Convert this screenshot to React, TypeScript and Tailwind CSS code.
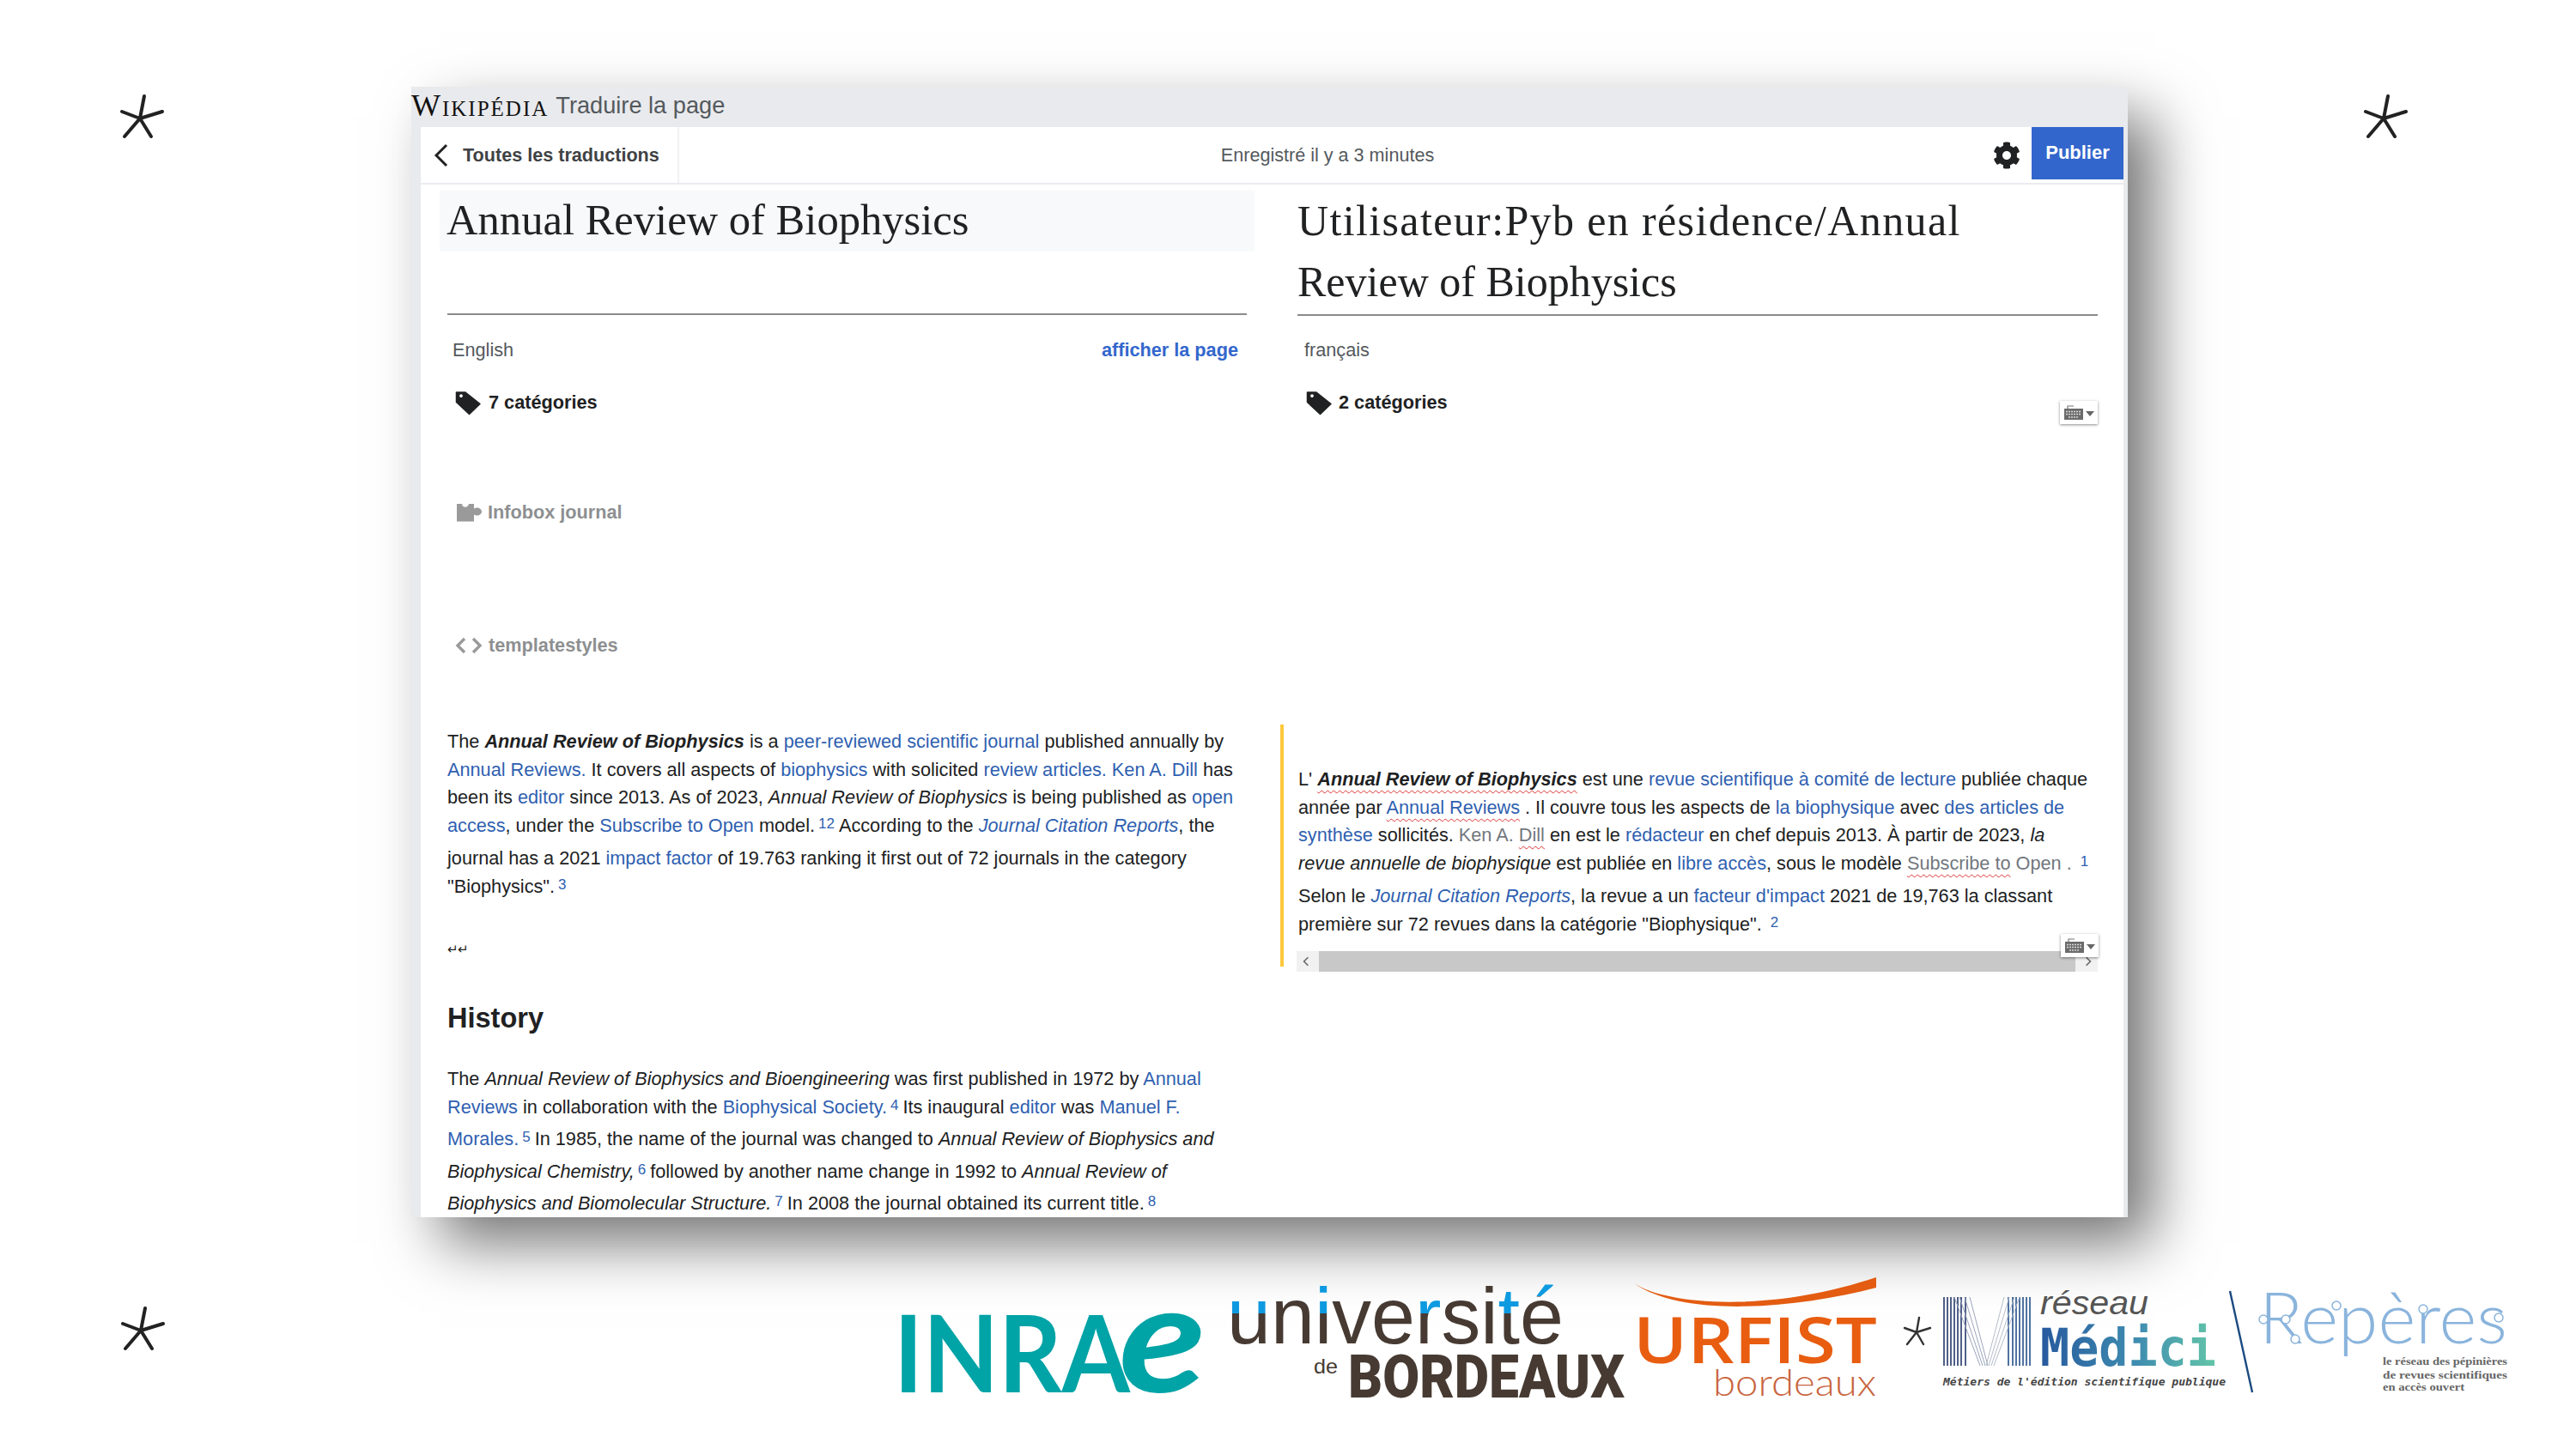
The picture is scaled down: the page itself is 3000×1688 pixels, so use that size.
import React from "react";
import { FaCog } from "react-icons/fa";

const A = ({ children }: { children: React.ReactNode }) => <span className="text-[#2f5fb0]">{children}</span>;
const W = ({ children, gray }: { children: React.ReactNode; gray?: boolean }) => (
  <span className={`underline decoration-wavy decoration-[#d33] decoration-1 underline-offset-[5px] ${gray ? "text-[#72777d]" : ""}`}>{children}</span>
);
const S = ({ children }: { children: React.ReactNode }) => <sup className="text-[#2f5fb0] text-[17px] top-[-4px] pl-[4px] pr-[5px]">{children}</sup>;
const L = ({ children, extra }: { children: React.ReactNode; extra?: boolean }) => (
  <div className={`whitespace-nowrap h-[32.5px] leading-[32.5px] ${extra ? "mt-[6px]" : ""}`}>{children}</div>
);

const Star = ({ className }: { className: string }) => (
  <svg viewBox="0 0 140 100" className={className} fill="none" stroke="#222" strokeWidth="4" strokeLinecap="round">
    <path d="M63 58L68 32M63 58L42 50M63 58L89 50M63 58L45 79M63 58L76 79" />
  </svg>
);

const Keyboard = () => (
  <div className="w-[44px] h-[27px] bg-white shadow-[0_1px_3px_rgba(0,0,0,0.45)] flex items-center justify-center gap-[3px]">
    <svg viewBox="0 0 22 18" className="w-[22px] h-[18px]">
      <path d="M4 4V1H11" fill="none" stroke="#777" strokeWidth="1.2" />
      <rect x="0" y="4" width="22" height="13" fill="#6b6b6b" />
      <path d="M2 7.5H20M2 10.5H20M5 14H17" stroke="#d8d8d8" strokeWidth="1.4" strokeDasharray="2 1" />
    </svg>
    <svg viewBox="0 0 10 6" className="w-[10px] h-[6px] mt-[3px]"><path d="M0 0H10L5 6Z" fill="#666" /></svg>
  </div>
);

const Tag = () => (
  <svg viewBox="0 0 30 29" className="w-[30px] h-[29px] shrink-0">
    <path fillRule="evenodd" fill="#202122" stroke="#202122" strokeWidth="1.5" strokeLinejoin="round" d="M1.5 2H12L29 15.5L16.5 27.5L1.5 13.5ZM7 3.5A2.6 2.6 0 1 0 7 8.7A2.6 2.6 0 1 0 7 3.5Z" />
  </svg>
);

const Puzzle = () => (
  <svg viewBox="0 0 30 22" className="w-[30px] h-[22px] shrink-0">
    <path fill="#9a9a9a" d="M1 1H7C7.5 6 14 6 15 1H21V6.5C25 4 30 6.5 30 10C30 13.5 25 16 21 13.5V21.5H1Z" />
  </svg>
);

const CodeMark = () => (
  <svg viewBox="0 0 32 20" className="w-[32px] h-[20px] shrink-0" fill="none" stroke="#9a9a9a" strokeWidth="3.4">
    <path d="M11 2L3 10L11 18M21 2L29 10L21 18" />
  </svg>
);

const Medici = () => {
  const xs = [0, 4, 8, 12, 16, 20, 25];
  return (
    <g fill="none">
      {xs.map((d) => <line key={`a${d}`} x1={2264 + d} y1="1511" x2={2264 + d} y2="1591" stroke="#24386a" strokeWidth="1.6" />)}
      {xs.map((d) => <line key={`b${d}`} x1={2364 - d} y1="1511" x2={2364 - d} y2="1591" stroke="#24508a" strokeWidth="1.6" />)}
      {[0, 6, 12, 18].map((d) => <line key={`c${d}`} x1={2276 + d} y1="1511" x2={2306 + d / 2} y2="1591" stroke="#9aa6bc" strokeWidth="1" />)}
      {[0, 6, 12, 18].map((d) => <line key={`e${d}`} x1={2352 - d} y1="1511" x2={2322 - d / 2} y2="1591" stroke="#b4bccb" strokeWidth="1" />)}
    </g>
  );
};

export default function App() {
  return (
    <div className="w-[3000px] h-[1688px] bg-white overflow-hidden font-['Liberation_Sans',Arial,sans-serif] text-[#202122] text-[21.7px]">
      <div className="flex items-start h-[1418px]">
        <Star className="w-[140px] h-[100px] ml-[100px] mt-[80px] shrink-0" />
        <div className="ml-[239px] mt-[101px] w-[1999px] h-[1317px] shrink-0 bg-[#e9eaed] flex flex-col pl-[11px] pr-[5px] shadow-[32px_32px_66px_-2px_rgba(0,0,0,0.55)]">
          <div className="h-[47px] -ml-[11px] flex items-center shrink-0 pb-[4px]">
            <span className="font-['Liberation_Serif',serif] text-[36px] tracking-[2px] [font-variant:small-caps] text-[#111] leading-none">Wikipédia</span>
            <span className="ml-[8px] text-[27.2px] text-[#54595d] leading-none">Traduire la page</span>
          </div>
          <div className="flex-1 bg-white flex flex-col overflow-hidden">
            <div className="h-[67px] shrink-0 border-b-2 border-[#eaecf0] flex items-start">
              <div className="w-[301px] h-[65px] border-r-2 border-[#f0f1f3] flex items-center pl-[15px]">
                <svg viewBox="0 0 18 28" className="w-[18px] h-[28px]"><path d="M15 2L3 14L15 26" fill="none" stroke="#202122" strokeWidth="3" /></svg>
                <span className="ml-[16px] font-bold text-[21.6px] text-[#404244] whitespace-nowrap pt-[2px]">Toutes les traductions</span>
              </div>
              <div className="flex-1 h-[65px] flex items-center justify-center pr-[20px] pt-[2px] text-[#54595d] text-[21.6px]">Enregistré il y a 3 minutes</div>
              <div className="h-[65px] flex items-center pr-[13px]"><FaCog className="w-[32px] h-[32px] text-[#202122]" /></div>
              <div className="w-[107px] h-[61px] bg-[#3366cc] text-white font-bold text-[22px] flex items-center justify-center pb-[2px]">Publier</div>
            </div>
            <div className="flex-1 flex overflow-hidden">
              <div className="w-[1021px] shrink-0 pl-[22px]">
                <div className="mt-[7px] w-[949px] h-[71px] bg-[#f8f9fa] pl-[8px] pb-[3px] flex items-center font-['Liberation_Serif',serif] text-[50.6px] leading-none">Annual Review of Biophysics</div>
                <div className="ml-[9px] w-[931px]">
                  <div className="mt-[72px] h-[2px] bg-[#8a8a8a]" />
                  <div className="mt-[26px] h-[30px] flex items-center justify-between pl-[6px] pr-[10px]">
                    <span className="text-[#54595d]">English</span>
                    <span className="text-[#3366cc] font-bold">afficher la page</span>
                  </div>
                  <div className="mt-[31px] h-[30px] flex items-center pl-[9px] gap-[9px] font-bold">
                    <Tag /><span>7 catégories</span>
                  </div>
                  <div className="mt-[98px] h-[30px] flex items-center pl-[10px] gap-[7px] font-bold text-[#8d8f91]">
                    <Puzzle /><span>Infobox journal</span>
                  </div>
                  <div className="mt-[125px] h-[30px] flex items-center pl-[9px] gap-[7px] font-bold text-[#8d8f91]">
                    <CodeMark /><span>templatestyles</span>
                  </div>
                  <div className="mt-[81px]">
                    <L>The <b><i>Annual Review of Biophysics</i></b> is a <A>peer-reviewed scientific journal</A> published annually by</L>
                    <L><A>Annual Reviews.</A> It covers all aspects of <A>biophysics</A> with solicited <A>review articles. Ken A. Dill</A> has</L>
                    <L>been its <A>editor</A> since 2013. As of 2023, <i>Annual Review of Biophysics</i> is being published as <A>open</A></L>
                    <L><A>access</A>, under the <A>Subscribe to Open</A> model.<S>12</S>According to the <A><i>Journal Citation Reports</i></A>, the</L>
                    <L extra>journal has a 2021 <A>impact factor</A> of 19.763 ranking it first out of 72 journals in the category</L>
                    <L>"Biophysics".<S>3</S></L>
                  </div>
                  <div className="mt-[47px] h-[20px] leading-[20px] text-[15px] tracking-[-1px]">↵↵</div>
                  <div className="mt-[50px] h-[40px] leading-[40px] font-bold text-[32.5px]">History</div>
                  <div className="mt-[35px]">
                    <L>The <i>Annual Review of Biophysics and Bioengineering</i> was first published in 1972 by <A>Annual</A></L>
                    <L><A>Reviews</A> in collaboration with the <A>Biophysical Society.</A><S>4</S>Its inaugural <A>editor</A> was <A>Manuel F.</A></L>
                    <div className="mt-[-1px]"><L extra><A>Morales.</A><S>5</S>In 1985, the name of the journal was changed to <i>Annual Review of Biophysics and</i></L></div>
                    <div className="mt-[-1px]"><L extra><i>Biophysical Chemistry,</i><S>6</S>followed by another name change in 1992 to <i>Annual Review of</i></L></div>
                    <div className="mt-[-1px]"><L extra><i>Biophysics and Biomolecular Structure.</i><S>7</S>In 2008 the journal obtained its current title.<S>8</S></L></div>
                  </div>
                </div>
              </div>
              <div className="w-[932px] shrink-0">
                <div className="mt-[7px] h-[142px] font-['Liberation_Serif',serif] text-[50px] leading-[71px]"><span className="tracking-[1.37px]">Utilisateur:Pyb en résidence/Annual</span><br />Review of Biophysics</div>
                <div className="mt-[2px] h-[2px] bg-[#8a8a8a]" />
                <div className="mt-[25px] h-[30px] flex items-center pl-[8px] text-[#54595d]">français</div>
                <div className="mt-[31px] h-[30px] flex items-start justify-between font-bold">
                  <div className="h-[30px] flex items-center pl-[10px] gap-[8px]"><Tag /><span>2 catégories</span></div>
                  <div className="mt-[13px]"><Keyboard /></div>
                </div>
                <div className="mt-[360px] -ml-[20px] h-[282px] border-l-4 border-[#ffc83d] pl-[17px] pt-[48px] relative">
                  <L>L' <W><b><i>Annual Review of Biophysics</i></b></W> est une <A>revue scientifique à comité de lecture</A> publiée chaque</L>
                  <L>année par <A><W>Annual Reviews</W></A> . Il couvre tous les aspects de <A>la biophysique</A> avec <A>des articles de</A></L>
                  <L><A>synthèse</A> sollicités. <span className="text-[#72777d]">Ken A. <W gray>Dill</W></span> en est le <A>rédacteur</A> en chef depuis 2013. À partir de 2023, <i>la</i></L>
                  <L><i>revue annuelle de biophysique</i> est publiée en <A>libre accès</A>, sous le modèle <W gray>Subscribe to</W> <span className="text-[#72777d]">Open .</span> <S>1</S></L>
                  <L extra>Selon le <A><i>Journal Citation Reports</i></A>, la revue a un <A>facteur d'impact</A> 2021 de 19,763 la classant</L>
                  <L>première sur 72 revues dans la catégorie "Biophysique". <S>2</S></L>
                  <div className="mt-[15px] -ml-[2px] w-[933px] h-[24px] bg-[#f1f1f1] flex items-center justify-between text-[#555]">
                    <svg viewBox="0 0 10 14" className="w-[8px] h-[12px] ml-[7px]"><path d="M8 1L2 7L8 13" fill="none" stroke="#666" strokeWidth="2" /></svg>
                    <div className="w-[881px] h-[24px] bg-[#c8c8c8]" />
                    <svg viewBox="0 0 10 14" className="w-[8px] h-[12px] mr-[7px]"><path d="M2 1L8 7L2 13" fill="none" stroke="#666" strokeWidth="2" /></svg>
                  </div>
                  <div className="absolute right-[-1px] top-[244px]"><Keyboard /></div>
                </div>
              </div>
            </div>
          </div>
        </div>
        <Star className="w-[140px] h-[100px] ml-[235px] mt-[80px] shrink-0" />
      </div>
      <div className="flex items-start">
        <Star className="w-[140px] h-[100px] ml-[101px] mt-[74px] shrink-0" />
        <div className="ml-[799px] mt-[70px] flex items-start">
          <svg viewBox="1040 1488 385 152" className="w-[385px] h-[152px] overflow-visible">
            <text x="1041" y="1622" fontFamily="Lato" fontWeight="700" fontSize="125" fill="#00a3a6" textLength="275" lengthAdjust="spacingAndGlyphs">INRA</text>
            <text x="1303" y="1622" fontFamily="Lato" fontWeight="700" fontStyle="italic" fontSize="176" fill="#00a3a6" textLength="102" lengthAdjust="spacingAndGlyphs">e</text>
          </svg>
          <svg viewBox="1425 1488 470 152" className="w-[470px] h-[152px] overflow-visible">
            <defs>
              <linearGradient id="ub" gradientUnits="userSpaceOnUse" x1="0" y1="1490" x2="0" y2="1570">
                <stop offset="0.5" stopColor="#0e9ae0" />
                <stop offset="0.5" stopColor="#463a32" />
              </linearGradient>
              <linearGradient id="ua" gradientUnits="userSpaceOnUse" x1="0" y1="1490" x2="0" y2="1570">
                <stop offset="0.25" stopColor="#0e9ae0" />
                <stop offset="0.25" stopColor="#463a32" />
              </linearGradient>
            </defs>
            <text x="1429" y="1565" fontFamily="Liberation Sans" fontSize="92" fill="#463a32" textLength="392" lengthAdjust="spacingAndGlyphs">
              <tspan fill="url(#ub)">u</tspan>n<tspan fill="url(#ub)">i</tspan>ve<tspan fill="url(#ub)">r</tspan>si<tspan fill="url(#ub)">t</tspan><tspan fill="url(#ua)">é</tspan>
            </text>
            <text x="1530" y="1600" fontFamily="Liberation Sans" fontSize="24" fill="#463a32" textLength="28" lengthAdjust="spacingAndGlyphs">de</text>
            <text x="1570" y="1628" fontFamily="Roboto" fontWeight="900" fontSize="70" fill="#463a32" textLength="322" lengthAdjust="spacingAndGlyphs">BORDEAUX</text>
          </svg>
          <svg viewBox="1895 1488 305 152" className="w-[305px] h-[152px] overflow-visible">
            <path d="M1903 1495C1940 1520 2060 1530 2185 1488L2185 1500C2090 1525 1960 1535 1903 1495Z" fill="#e35c12" />
            <text x="1902" y="1588" fontFamily="Open Sans" fontWeight="600" fontSize="74" fill="#e85d10" textLength="284" lengthAdjust="spacingAndGlyphs">URFIST</text>
            <text x="1995" y="1626" fontFamily="Lato" fontWeight="300" fontSize="44" fill="#c96540" textLength="190" lengthAdjust="spacingAndGlyphs">bordeaux</text>
          </svg>
          <svg viewBox="2200 1488 55 152" className="w-[55px] h-[152px]" fill="none" stroke="#333" strokeWidth="2.4" strokeLinecap="round">
            <path d="M2232 1552L2235 1535M2232 1552L2218 1547M2232 1552L2248 1547M2232 1552L2221 1566M2232 1552L2240 1566" />
          </svg>
          <svg viewBox="2255 1488 340 152" className="w-[340px] h-[152px] overflow-visible">
            <defs>
              <linearGradient id="med" gradientUnits="userSpaceOnUse" x1="2378" y1="0" x2="2579" y2="0">
                <stop offset="0" stopColor="#275a9e" />
                <stop offset="0.55" stopColor="#3f8db0" />
                <stop offset="1" stopColor="#62c4a8" />
              </linearGradient>
            </defs>
            <Medici />
            <text x="2376" y="1531" fontFamily="Liberation Sans" fontStyle="italic" fontSize="38" fill="#555" textLength="126" lengthAdjust="spacingAndGlyphs">réseau</text>
            <text x="2376" y="1591" fontFamily="DejaVu Sans Mono" fontWeight="700" fontSize="60" fill="url(#med)" textLength="205" lengthAdjust="spacingAndGlyphs">Médici</text>
            <text x="2263" y="1614" fontFamily="DejaVu Sans Mono" fontWeight="700" fontStyle="italic" fontSize="13" fill="#444" textLength="329" lengthAdjust="spacingAndGlyphs">Métiers de l'édition scientifique publique</text>
          </svg>
          <svg viewBox="2595 1488 335 152" className="w-[335px] h-[152px] overflow-visible">
            <line x1="2597" y1="1504" x2="2623" y2="1622" stroke="#1a4a80" strokeWidth="2.4" />
            <text x="2631" y="1565" fontFamily="Lato" fontWeight="300" fontSize="82" fill="#8ab4dc" textLength="289" lengthAdjust="spacingAndGlyphs">Repères</text>
            <g fill="#fff" stroke="#8ab4dc" strokeWidth="1.5">
              <circle cx="2636" cy="1537" r="5" />
              <circle cx="2662" cy="1537" r="5" />
              <circle cx="2673" cy="1560" r="5" />
              <circle cx="2721" cy="1521" r="5" />
              <circle cx="2822" cy="1525" r="5" />
              <circle cx="2910" cy="1535" r="5" />
            </g>
            <g fontFamily="Liberation Serif" fontWeight="700" fontSize="13.5" fill="#666">
              <text x="2775" y="1590" textLength="145" lengthAdjust="spacingAndGlyphs">le réseau des pépinières</text>
              <text x="2775" y="1606" textLength="145" lengthAdjust="spacingAndGlyphs">de revues scientifiques</text>
              <text x="2775" y="1620" textLength="95" lengthAdjust="spacingAndGlyphs">en accès ouvert</text>
            </g>
          </svg>
        </div>
      </div>
    </div>
  );
}
